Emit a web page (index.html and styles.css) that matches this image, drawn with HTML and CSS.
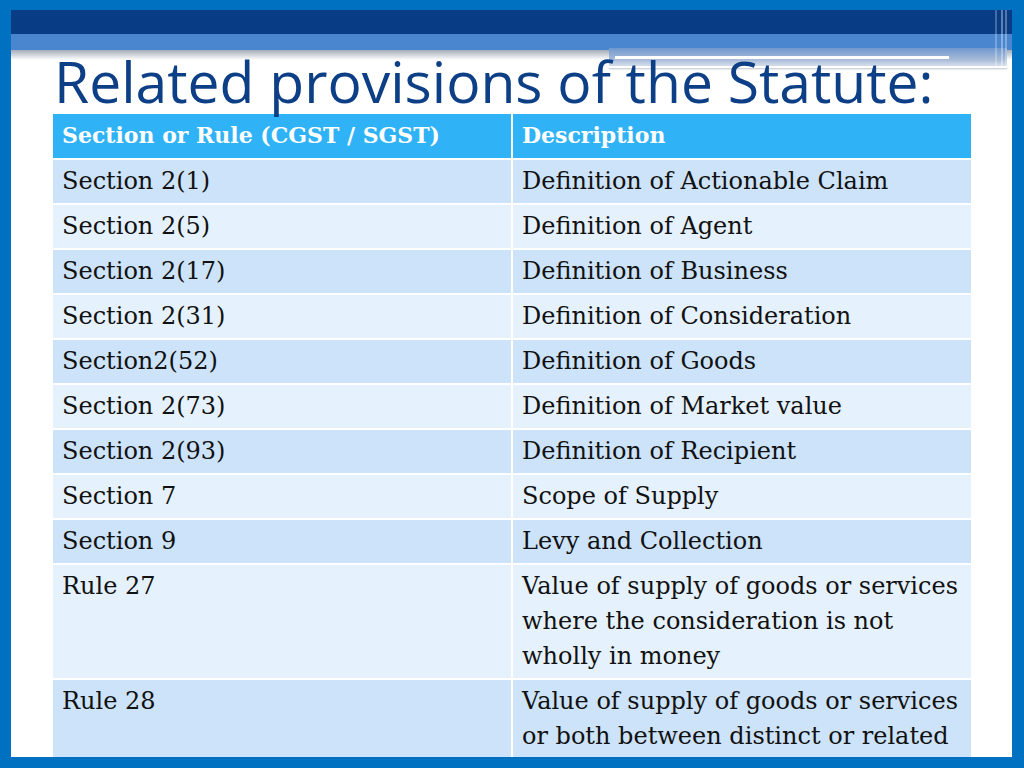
FILE: index.html
```html
<!DOCTYPE html>
<html>
<head>
<meta charset="utf-8">
<link rel="stylesheet" href="styles.css">
</head>
<body>
<div class="slide">
  <div class="canvas">
    <div class="header">
      <div class="band-dark"></div>
      <div class="band-light"></div>
      <div class="band-shadow"></div>
      <div class="deco-box"></div>
      <div class="deco-line"></div>
      <div class="deco-line2"></div>
      <div class="deco-v"></div>
    </div>
    <h1 class="title">Related provisions of the Statute:</h1>
    <table class="grid">
      <thead>
        <tr><th>Section or Rule (CGST / SGST)</th><th>Description</th></tr>
      </thead>
      <tbody>
        <tr class="odd"><td>Section 2(1)</td><td>Definition of Actionable Claim</td></tr>
        <tr class="even"><td>Section 2(5)</td><td>Definition of Agent</td></tr>
        <tr class="odd"><td>Section 2(17)</td><td>Definition of Business</td></tr>
        <tr class="even"><td>Section 2(31)</td><td>Definition of Consideration</td></tr>
        <tr class="odd"><td>Section2(52)</td><td>Definition of Goods</td></tr>
        <tr class="even"><td>Section 2(73)</td><td>Definition of Market value</td></tr>
        <tr class="odd"><td>Section 2(93)</td><td>Definition of Recipient</td></tr>
        <tr class="even"><td>Section 7</td><td>Scope of Supply</td></tr>
        <tr class="odd"><td>Section 9</td><td>Levy and Collection</td></tr>
        <tr class="even"><td>Rule 27</td><td>Value of supply of goods or services where the consideration is not wholly in money</td></tr>
        <tr class="odd"><td>Rule 28</td><td>Value of supply of goods or services or both between distinct or related persons</td></tr>
      </tbody>
    </table>
  </div>
</div>
</body>
</html>
```
FILE: styles.css
```css
html, body {
  margin: 0;
  padding: 0;
}
.slide {
  width: 1024px;
  height: 768px;
  box-sizing: border-box;
  background: #0070c0;
  padding: 10px 12px 11px 11px;
}
.canvas {
  position: relative;
  width: 100%;
  height: 100%;
  background: #ffffff;
  overflow: hidden;
}
.header {
  position: relative;
  height: 40px;
}
.band-dark {
  height: 24px;
  background: #083c85;
}
.band-light {
  height: 16px;
  background: #4a86d0;
}
.band-shadow {
  position: absolute;
  left: 0;
  right: 0;
  top: 40px;
  height: 10px;
  background: linear-gradient(#a4adb9, rgba(255,255,255,0));
}
.deco-box {
  position: absolute;
  left: 598px;
  width: 398px;
  top: 38px;
  height: 20px;
  background: linear-gradient(#6f98cf, #a9bcd8 60%, rgba(225,232,242,0.8));
}
.deco-line {
  position: absolute;
  left: 604px;
  width: 334px;
  top: 46px;
  height: 3px;
  background: #ffffff;
}
.deco-line2 {
  position: absolute;
  left: 598px;
  width: 398px;
  top: 56px;
  height: 2px;
  background: #ffffff;
  box-shadow: 0 1px 2px rgba(120,130,150,0.5);
}
.deco-v {
  position: absolute;
  left: 984px;
  width: 14px;
  top: 0;
  height: 58px;
  background: linear-gradient(90deg, rgba(255,255,255,0.25) 0 2px, transparent 2px 6px, rgba(255,255,255,0.35) 6px 8px, transparent 8px 10px, rgba(255,255,255,0.3) 10px 12px, transparent 12px);
}
.title {
  position: relative;
  margin: 0 0 0 43px;
  padding: 0;
  font-family: "Open Sans", sans-serif;
  font-weight: 400;
  font-stretch: 90%;
  font-size: 57px;
  line-height: 62px;
  color: #0d3f86;
  white-space: nowrap;
}
.grid {
  margin-left: 40px;
  border-collapse: separate;
  border-spacing: 2px;
  width: 922px;
  table-layout: fixed;
  font-family: "DejaVu Serif", serif;
  font-size: 24px;
  line-height: 35px;
  color: #111111;
}
.grid th, .grid td {
  text-align: left;
  vertical-align: top;
  padding: 4px 10px 4px 9px;
}
.grid th {
  background: #30b2f6;
  color: #ffffff;
  font-size: 22px;
  font-weight: bold;
  padding: 4px 10px 5px 9px;
}
.grid tr.odd td {
  background: #cce3fa;
}
.grid tr.even td {
  background: #e5f1fd;
}
```
